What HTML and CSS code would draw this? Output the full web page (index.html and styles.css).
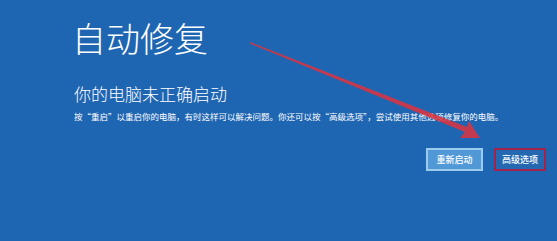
FILE: index.html
```html
<!DOCTYPE html>
<html>
  <head>
    <title>自动修复</title>
    <link rel="stylesheet" href="styles.css">
  </head>
  <body>
    <div class="screen">
      <h1>自动修复</h1>
      <h2>你的电脑未正确启动</h2>
      <p class="message">按“重启”以重启你的电脑，有时这样可以解决问题。你还可以按“高级选项”，尝试使用其他选项修复你的电脑。</p>
      <div class="actions">
        <button class="btn btn-primary">重新启动</button>
        <button class="btn btn-marked">高级选项</button>
      </div>

      <!-- red annotation arrow -->
      <svg class="arrow" width="557" height="241" viewBox="0 0 557 241">
        <polygon points="250,42 467,127 469,121 480,138 460,138 465,132 250,43.5" fill="#e0323c" opacity="0.85" />
      </svg>
    </div>
  </body>
</html>
```

FILE: styles.css
```css
body {
  margin: 0;
  background-color: #1f66b2;
  font-family: "Noto Sans CJK SC", "Noto Sans", sans-serif;
  color: #ffffff;
}
.screen {
  position: relative;
  width: 557px;
  height: 241px;
  padding: 20px 11px 0 74px;
  box-sizing: border-box;
  overflow: hidden;
}
h1 {
  margin: 0;
  font-size: 34px;
  font-weight: 300;
  line-height: 36px;
  margin-left: -2px;
}
h2 {
  margin: 28px 0 0 0;
  font-size: 17px;
  font-weight: 300;
  line-height: 20px;
}
.message {
  margin: 6px 0 0 0;
  font-size: 8.5px;
  line-height: 12px;
  white-space: nowrap;
}
.actions {
  display: flex;
  justify-content: flex-end;
  gap: 11px;
  margin-top: 26px;
}
.btn {
  font-family: inherit;
  font-size: 9px;
  font-weight: 500;
  color: #ffffff;
  height: 23px;
  padding: 0;
  box-sizing: border-box;
  cursor: pointer;
}
.btn-primary {
  width: 57px;
  background-color: #5199d6;
  border: 2px solid #9ccbee;
}
.btn-marked {
  width: 52px;
  background-color: #2468b2;
  border: 2px solid #a3234a;
}
.arrow {
  position: absolute;
  left: 0;
  top: 0;
  pointer-events: none;
}
```
